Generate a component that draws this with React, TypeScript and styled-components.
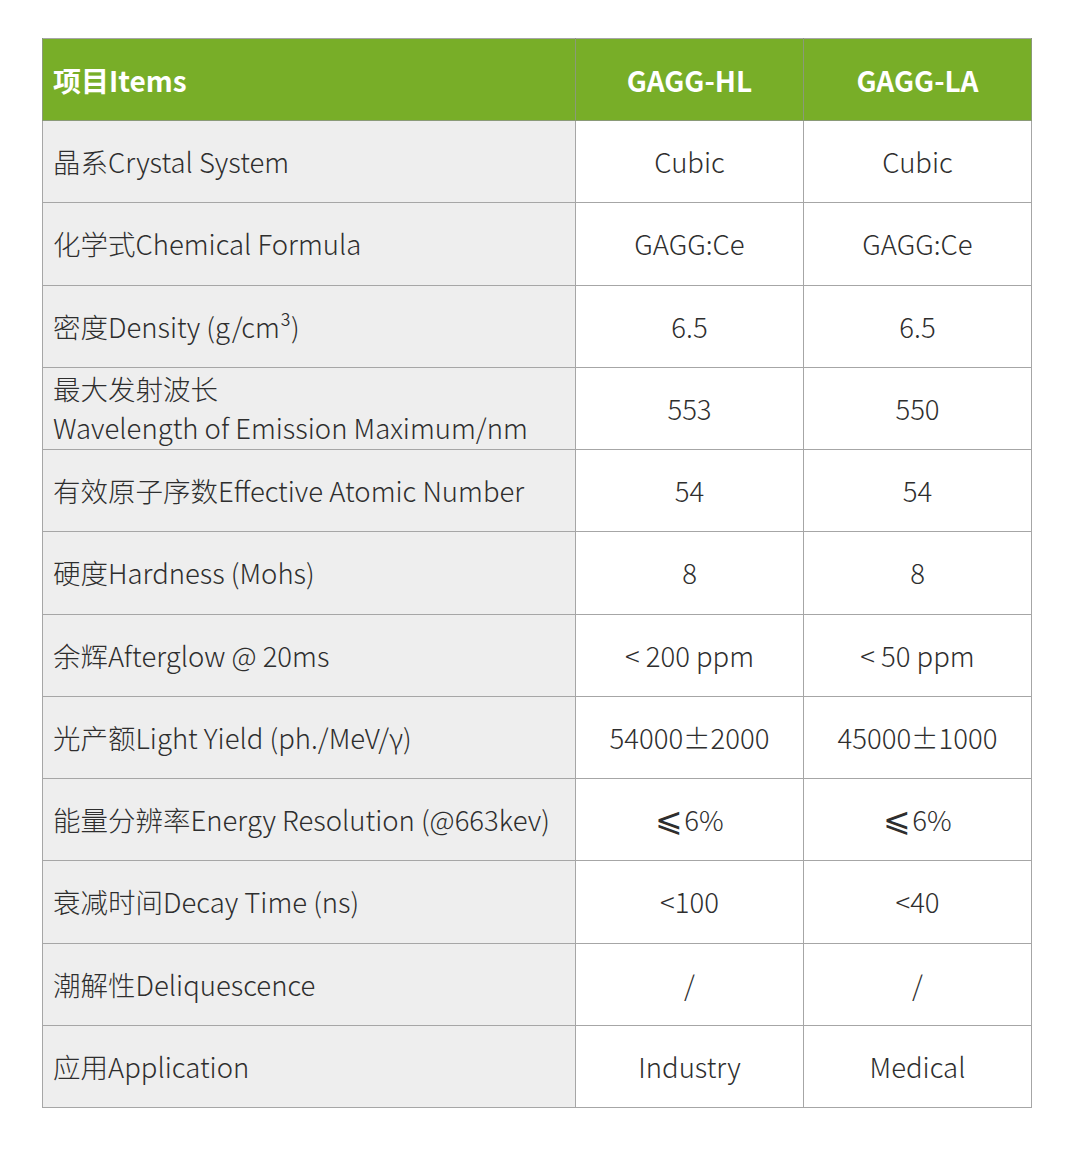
import React from 'react'
import styled, { createGlobalStyle } from 'styled-components'

const GlobalStyle = createGlobalStyle`
  body {
    margin: 0;
    background: #fff;
    font-family: "Noto Sans CJK SC", "Noto Sans", sans-serif;
  }
`

const Page = styled.div`
  padding: 38px 0 0 42px;
`

const Table = styled.table`
  border-collapse: collapse;
  table-layout: fixed;
  width: 990px;
  border: 1px solid #a6a6a6;
`

const HeadCell = styled.th<{ $left?: boolean }>`
  height: 81px;
  background: #78ae28;
  color: #fff;
  font-size: 28px;
  font-weight: 700;
  text-align: ${p => (p.$left ? 'left' : 'center')};
  padding: ${p => (p.$left ? '0 0 0 10px' : '0')};
  border: 1px solid #8a9a78;
  border-top: none;
`

const Cell = styled.td<{ $label?: boolean }>`
  height: 81.25px;
  background: ${p => (p.$label ? '#eeeeee' : '#fff')};
  color: #2e2e2e;
  font-size: 27.5px;
  line-height: 39px;
  font-weight: 300;
  text-align: ${p => (p.$label ? 'left' : 'center')};
  padding: ${p => (p.$label ? '0 0 0 10px' : '0')};
  border: 1px solid #a6a6a6;
  white-space: nowrap;
`

const Leq = styled.span`
  font-size: 33px;
  font-weight: 100;
  line-height: 0;
  margin-right: 1px;
`

const rows: [React.ReactNode, React.ReactNode, React.ReactNode][] = [
  ['晶系Crystal System', 'Cubic', 'Cubic'],
  ['化学式Chemical Formula', 'GAGG:Ce', 'GAGG:Ce'],
  [<>密度Density (g/cm³)</>, '6.5', '6.5'],
  [<>最大发射波长<br />Wavelength of Emission Maximum/nm</>, '553', '550'],
  ['有效原子序数Effective Atomic Number', '54', '54'],
  ['硬度Hardness (Mohs)', '8', '8'],
  ['余辉Afterglow @ 20ms', '< 200 ppm', '< 50 ppm'],
  ['光产额Light Yield (ph./MeV/γ)', '54000±2000', '45000±1000'],
  ['能量分辨率Energy Resolution (@663kev)', <><Leq>⩽</Leq>6%</>, <><Leq>⩽</Leq>6%</>],
  ['衰减时间Decay Time (ns)', '<100', '<40'],
  ['潮解性Deliquescence', '/', '/'],
  ['应用Application', 'Industry', 'Medical'],
]

export default function App() {
  return (
    <>
      <GlobalStyle />
      <Page>
        <Table>
          <colgroup>
            <col style={{ width: 533 }} />
            <col style={{ width: 228 }} />
            <col style={{ width: 228 }} />
          </colgroup>
          <thead>
            <tr>
              <HeadCell $left>项目Items</HeadCell>
              <HeadCell>GAGG-HL</HeadCell>
              <HeadCell>GAGG-LA</HeadCell>
            </tr>
          </thead>
          <tbody>
            {rows.map((r, i) => (
              <tr key={i}>
                <Cell $label>{r[0]}</Cell>
                <Cell>{r[1]}</Cell>
                <Cell>{r[2]}</Cell>
              </tr>
            ))}
          </tbody>
        </Table>
      </Page>
    </>
  )
}
